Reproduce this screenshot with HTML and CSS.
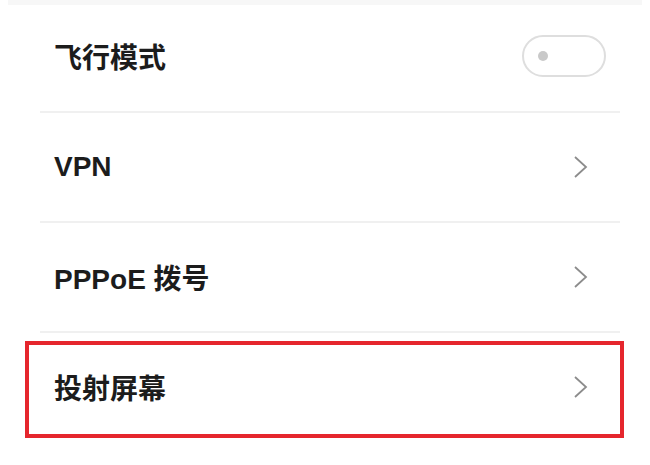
FILE: index.html
```html
<!DOCTYPE html>
<html lang="zh-CN">
<head>
    <meta charset="UTF-8">
    <meta name="viewport" content="width=device-width, initial-scale=1.0">
    <title>更多连接</title>
    <link rel="stylesheet" href="styles.css">
</head>
<body>

<div class="top-band"></div>

<ul class="settings">
    <li class="item first">
        <span class="label">飞行模式</span>
        <span class="switch"><span class="knob"></span></span>
    </li>
    <li class="item">
        <span class="label">VPN</span>
        <svg class="chevron" width="15" height="24" viewBox="0 0 15 24">
            <path d="M2 2 L13 12 L2 22" fill="none" stroke="#8c8c8c" stroke-width="1.8"/>
        </svg>
    </li>
    <li class="item">
        <span class="label">PPPoE 拨号</span>
        <svg class="chevron" width="15" height="24" viewBox="0 0 15 24">
            <path d="M2 2 L13 12 L2 22" fill="none" stroke="#8c8c8c" stroke-width="1.8"/>
        </svg>
    </li>
    <li class="item marked">
        <span class="label">投射屏幕</span>
        <svg class="chevron" width="15" height="24" viewBox="0 0 15 24">
            <path d="M2 2 L13 12 L2 22" fill="none" stroke="#8c8c8c" stroke-width="1.8"/>
        </svg>
    </li>
</ul>

</body>
</html>
```

FILE: styles.css
```css
body {
    margin: 0;
    padding: 0;
    background-color: #fff;
    font-family: "Liberation Sans", "Noto Sans CJK SC", sans-serif;
}
.top-band {
    height: 5px;
    margin: 0 8px;
    background-color: #f7f7f7;
}
.settings {
    list-style: none;
    margin: 0 30px 0 40px;
    padding: 0;
}
.item {
    position: relative;
    display: flex;
    align-items: center;
    justify-content: space-between;
    height: 108px;
    padding: 0 14px 0 14px;
    border-bottom: 2px solid #f0f0f0;
}
.item.first {
    box-sizing: border-box;
    padding-bottom: 4px;
}
.item:last-child {
    border-bottom: none;
}
.label {
    font-size: 28px;
    font-weight: bold;
    color: #1c1c1c;
}
.switch {
    box-sizing: border-box;
    display: flex;
    align-items: center;
    width: 84px;
    height: 42px;
    padding-left: 14px;
    border: 2.5px solid #dedede;
    border-radius: 21px;
}
.knob {
    width: 10px;
    height: 10px;
    border-radius: 50%;
    background-color: #c9c9c9;
}
.chevron {
    margin-right: 18px;
}
.marked::after {
    content: "";
    position: absolute;
    top: 8px;
    left: -15px;
    right: -4px;
    bottom: 3px;
    border: 4px solid #e5262d;
}
```
